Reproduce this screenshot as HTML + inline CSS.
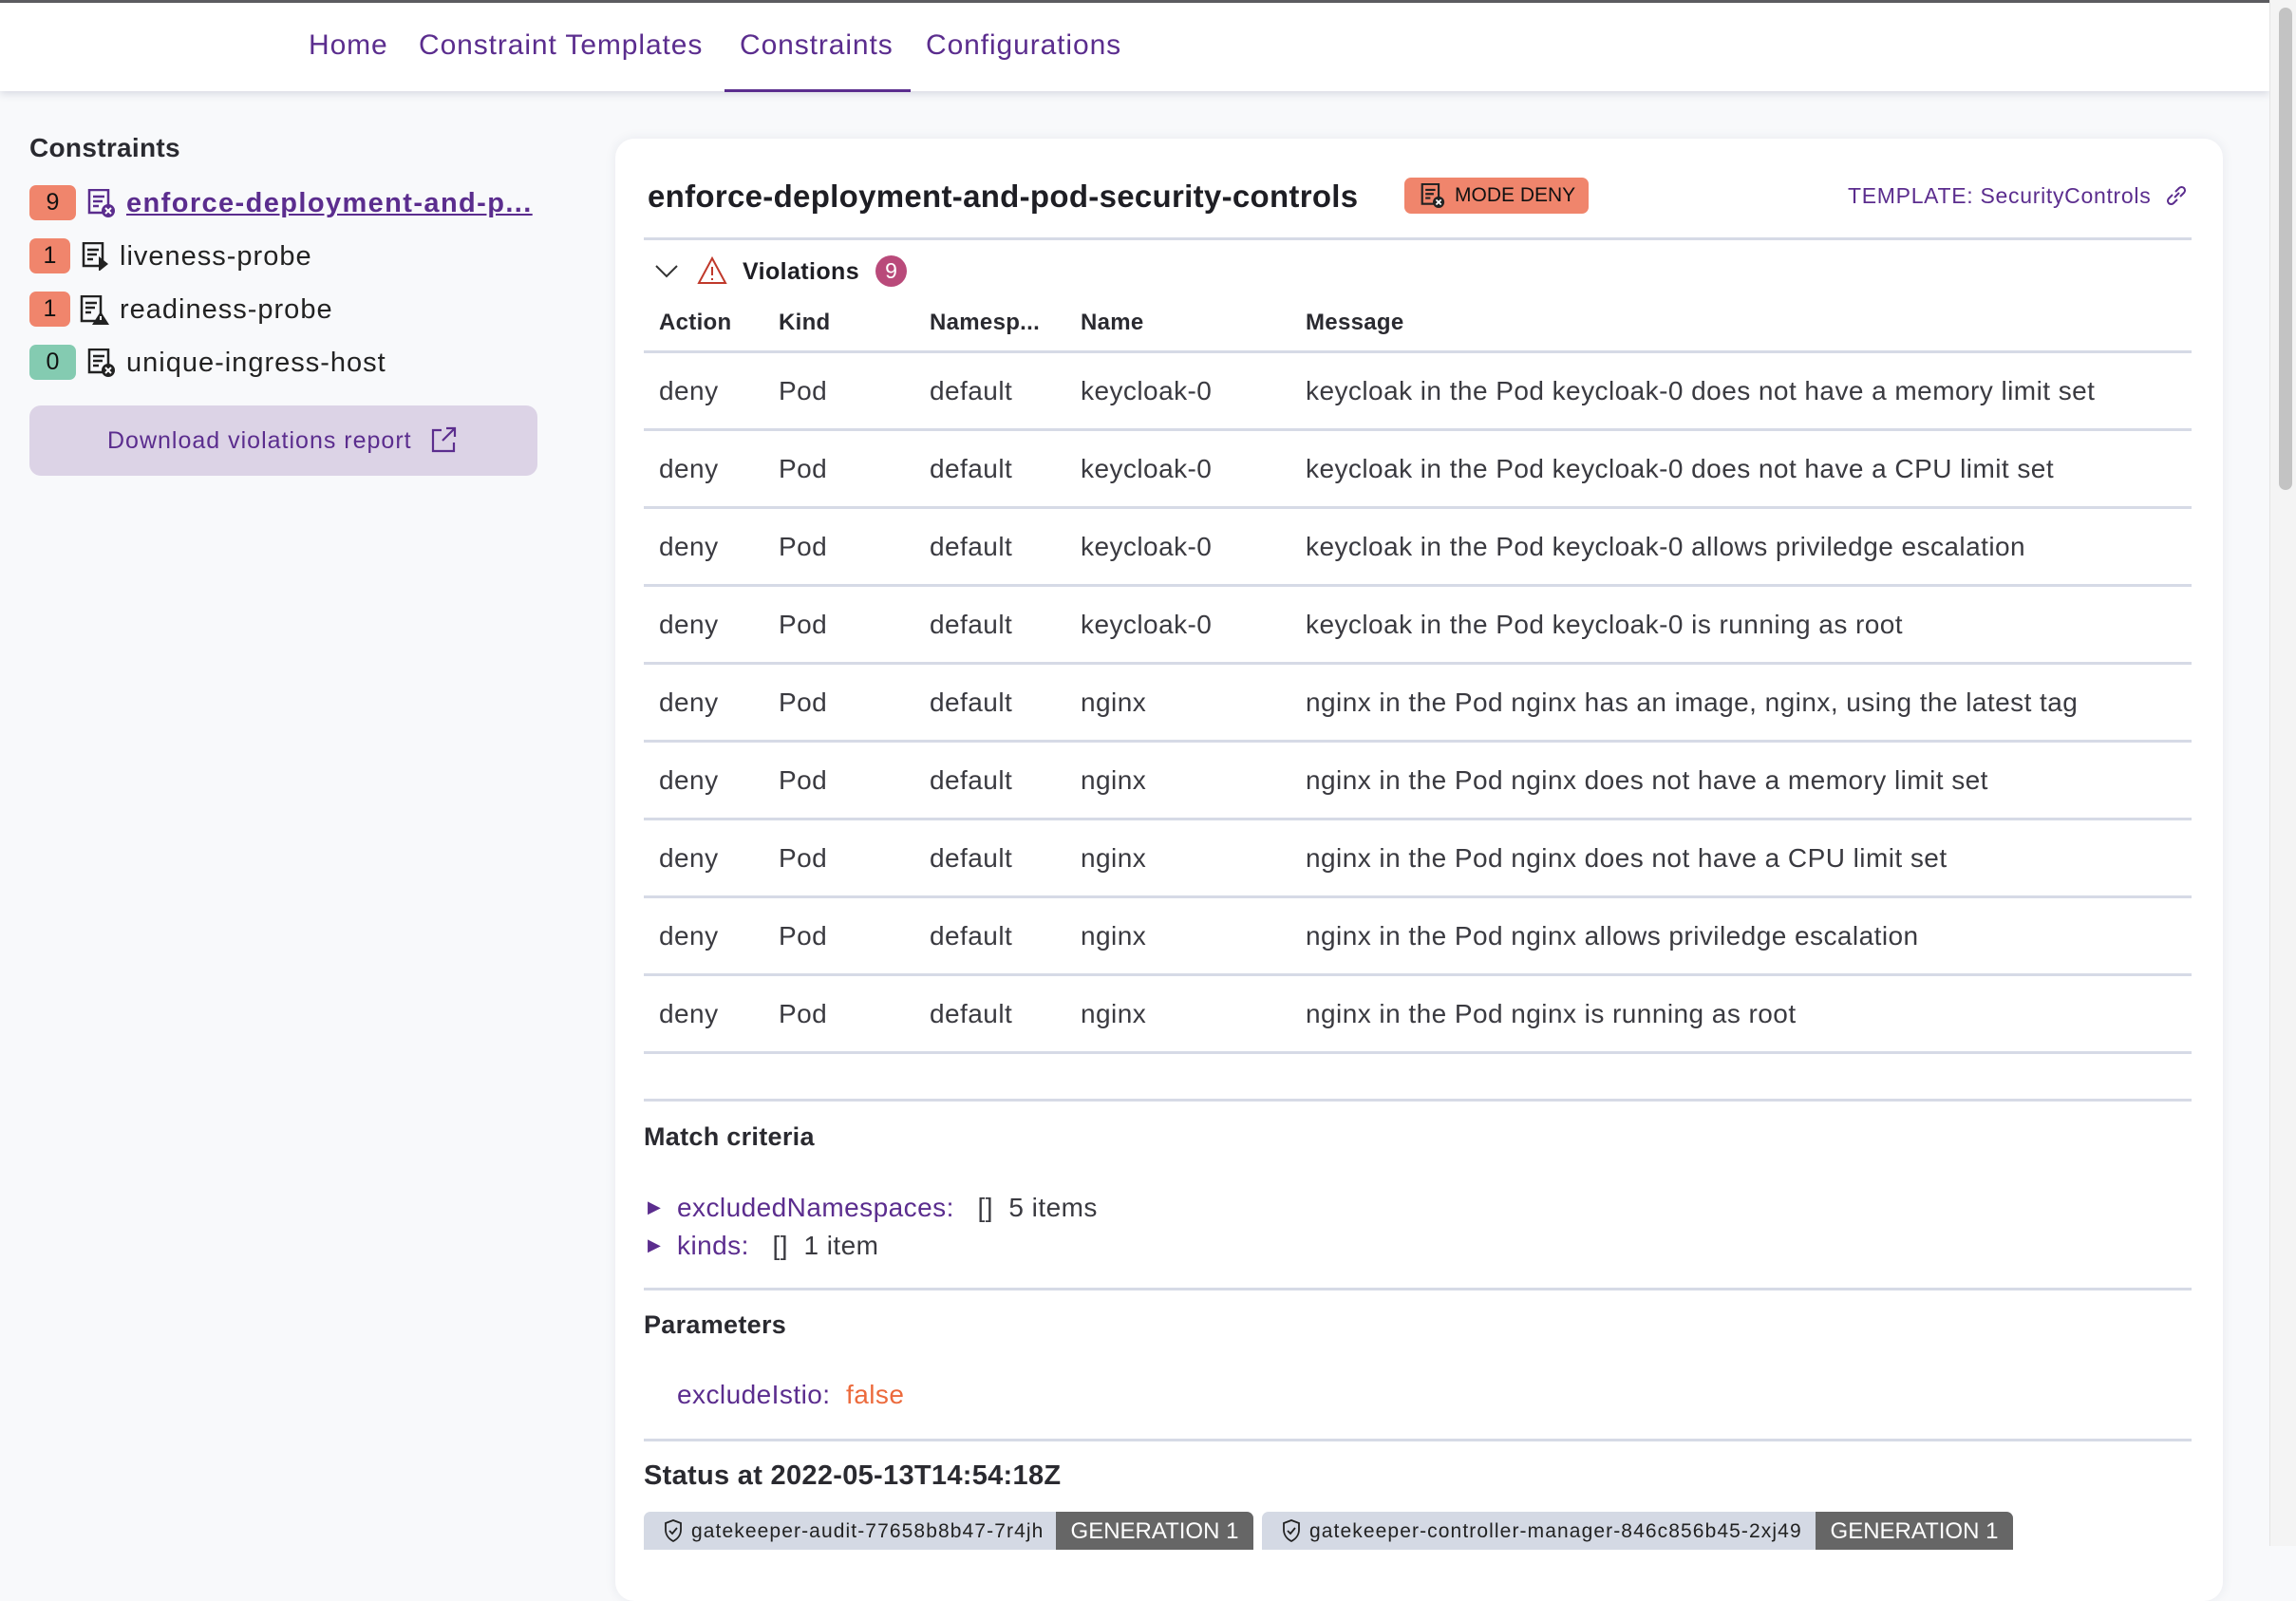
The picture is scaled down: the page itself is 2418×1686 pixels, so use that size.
<!DOCTYPE html>
<html><head><meta charset="utf-8"><style>
*{box-sizing:border-box;margin:0;padding:0}
body{width:2418px;height:1628px;overflow:hidden;background:#f8f9fb;font-family:"Liberation Sans",sans-serif;color:#2a2a30;position:relative}
.a{position:absolute;white-space:nowrap}
.nav{position:absolute;left:0;top:0;width:2390px;height:96px;background:#fff;border-top:3px solid #5c5c60;box-shadow:0 3px 8px rgba(40,50,90,.15)}
.nav span{position:absolute;top:28px;font-size:30px;color:#5b2d8e;letter-spacing:0.9px}
.sb{position:absolute;left:2390px;top:0;width:28px;height:1628px;background:#f4f4f4;border-left:1px solid #e4e4e4}
.thumb{position:absolute;left:2400px;top:8px;width:14px;height:508px;border-radius:7px;background:#c3c3c3}
.badge{position:absolute;left:31px;width:49px;height:37px;border-radius:7px;background:#f0856c;font-size:25px;text-align:center;line-height:37px;color:#111}
.item{position:absolute;left:126px;font-size:29px;color:#222;letter-spacing:1px}
.card{position:absolute;left:648px;top:146px;width:1693px;height:1540px;background:#fff;border-radius:20px;box-shadow:0 0 12px rgba(40,50,90,.08)}
.line{position:absolute;left:678px;width:1630px;height:3px;background:#d6dae6}
.th{position:absolute;top:326px;font-size:24px;font-weight:bold;color:#2a2a30;letter-spacing:0.3px}
.td{position:absolute;font-size:28px;color:#3a3a40;letter-spacing:0.45px}
h3{position:absolute;font-size:27px;font-weight:bold;color:#2a2a30;letter-spacing:0.3px}
.k{color:#5b2d8e}
</style></head><body>
<div class="nav">
<span style="left:325px">Home</span>
<span style="left:441px">Constraint Templates</span>
<span style="left:779px">Constraints</span>
<span style="left:975px">Configurations</span>
<div style="position:absolute;left:763px;top:91px;width:196px;height:3px;background:#5b2d8e"></div>
</div>
<div class="sb"></div><div class="thumb"></div>

<div class="a" style="left:31px;top:140px;font-size:28px;font-weight:bold;color:#2a2a30;letter-spacing:0.3px">Constraints</div>
<div class="badge" style="top:195px">9</div>
<div class="badge" style="top:251px;width:43px">1</div>
<div class="badge" style="top:307px;width:43px">1</div>
<div class="badge" style="top:363px;background:#84cbb1">0</div>
<svg class="a" style="left:92px;top:199px" width="30" height="30" viewBox="0 0 30 30"><rect x="2" y="1" width="20" height="24" fill="none" stroke="#5b2d8e" stroke-width="2.5"/><path d="M6 8h12M6 13h10M6 18h6" stroke="#5b2d8e" stroke-width="2.5"/><circle cx="22" cy="23" r="7" fill="#5b2d8e"/><path d="M19 20l6 6M25 20l-6 6" stroke="#fff" stroke-width="2"/></svg>
<svg class="a" style="left:86px;top:255px" width="30" height="30" viewBox="0 0 30 30"><rect x="2" y="1" width="20" height="24" fill="none" stroke="#222" stroke-width="2.5"/><path d="M6 8h12M6 13h10M6 18h6" stroke="#222" stroke-width="2.5"/><path d="M18 15l10 8-10 8z" fill="#222"/></svg>
<svg class="a" style="left:84px;top:311px" width="32" height="32" viewBox="0 0 32 32"><rect x="2" y="1" width="20" height="26" fill="none" stroke="#222" stroke-width="2.5"/><path d="M6 8h12M6 13h10M6 18h6" stroke="#222" stroke-width="2.5"/><path d="M22 17l9 14h-18z" fill="#222"/><path d="M22 22v4" stroke="#fff" stroke-width="2"/></svg>
<svg class="a" style="left:92px;top:367px" width="30" height="30" viewBox="0 0 30 30"><rect x="2" y="1" width="20" height="24" fill="none" stroke="#222" stroke-width="2.5"/><path d="M6 8h12M6 13h10M6 18h6" stroke="#222" stroke-width="2.5"/><circle cx="22" cy="23" r="7" fill="#222"/><path d="M19 20l6 6M25 20l-6 6" stroke="#fff" stroke-width="2"/></svg>
<div class="item" style="left:133px;top:198px;font-weight:bold;color:#5b2d8e;text-decoration:underline;letter-spacing:1.4px">enforce-deployment-and-p...</div>
<div class="item" style="top:254px">liveness-probe</div>
<div class="item" style="top:310px">readiness-probe</div>
<div class="item" style="left:133px;top:366px">unique-ingress-host</div>
<div class="a" style="left:31px;top:427px;width:535px;height:74px;border-radius:12px;background:#dcd3e6"></div>
<div class="a" style="left:113px;top:450px;font-size:25px;color:#5b2d8e;letter-spacing:1px">Download violations report</div>
<svg class="a" style="left:452px;top:448px" width="30" height="30" viewBox="0 0 30 30" fill="none" stroke="#5b2d8e" stroke-width="2.2"><path d="M13 5H4v22h22v-9M18 3h9v9M27 3L14 16"/></svg>

<div class="card"></div>
<div class="a" style="left:682px;top:188px;font-size:33px;font-weight:bold;color:#1e1e24;letter-spacing:0.3px">enforce-deployment-and-pod-security-controls</div>
<div class="a" style="left:1479px;top:187px;width:194px;height:38px;border-radius:7px;background:#f0856c"></div>
<svg class="a" style="left:1496px;top:193px" width="26" height="26" viewBox="0 0 30 30"><rect x="2" y="1" width="20" height="24" fill="none" stroke="#222" stroke-width="2.5"/><path d="M6 8h12M6 13h10M6 18h6" stroke="#222" stroke-width="2.5"/><circle cx="22" cy="23" r="7" fill="#222"/><path d="M19 20l6 6M25 20l-6 6" stroke="#fff" stroke-width="2"/></svg>
<div class="a" style="left:1532px;top:194px;font-size:21px;color:#111">MODE DENY</div>
<div class="a" style="left:1946px;top:193px;font-size:23px;color:#5b2d8e;letter-spacing:0.7px">TEMPLATE: SecurityControls</div>
<svg class="a" style="left:2279px;top:193px" width="26" height="26" viewBox="0 0 26 26" fill="none" stroke="#5b2d8e" stroke-width="2"><path d="M11 15l5-5M9 12l-4 4a3.5 3.5 0 005 5l4-4M17 14l4-4a3.5 3.5 0 00-5-5l-4 4"/></svg>
<div class="line" style="top:250px"></div>
<svg class="a" style="left:688px;top:275px" width="28" height="20" viewBox="0 0 28 20" fill="none" stroke="#333" stroke-width="2"><path d="M3 5l11 11 11-11"/></svg>
<svg class="a" style="left:734px;top:270px" width="32" height="30" viewBox="0 0 32 30" fill="none" stroke="#c0392b" stroke-width="2"><path d="M16 2L30 28H2z"/><path d="M16 11v9M16 23v2"/></svg>
<div class="a" style="left:782px;top:272px;font-size:25px;font-weight:bold;color:#1e1e24;letter-spacing:0.4px">Violations</div>
<div class="a" style="left:922px;top:269px;width:33px;height:33px;border-radius:50%;background:#b94a7a;color:#fff;font-size:23px;text-align:center;line-height:33px">9</div>
<div class="th" style="left:694px">Action</div>
<div class="th" style="left:820px">Kind</div>
<div class="th" style="left:979px">Namesp...</div>
<div class="th" style="left:1138px">Name</div>
<div class="th" style="left:1375px">Message</div>
<div class="line" style="top:369px"></div>

<div class="td" style="left:694px;top:396px">deny</div><div class="td" style="left:820px;top:396px">Pod</div><div class="td" style="left:979px;top:396px">default</div><div class="td" style="left:1138px;top:396px">keycloak-0</div><div class="td" style="left:1375px;top:396px">keycloak in the Pod keycloak-0 does not have a memory limit set</div><div class="line" style="top:451px"></div>
<div class="td" style="left:694px;top:478px">deny</div><div class="td" style="left:820px;top:478px">Pod</div><div class="td" style="left:979px;top:478px">default</div><div class="td" style="left:1138px;top:478px">keycloak-0</div><div class="td" style="left:1375px;top:478px">keycloak in the Pod keycloak-0 does not have a CPU limit set</div><div class="line" style="top:533px"></div>
<div class="td" style="left:694px;top:560px">deny</div><div class="td" style="left:820px;top:560px">Pod</div><div class="td" style="left:979px;top:560px">default</div><div class="td" style="left:1138px;top:560px">keycloak-0</div><div class="td" style="left:1375px;top:560px">keycloak in the Pod keycloak-0 allows priviledge escalation</div><div class="line" style="top:615px"></div>
<div class="td" style="left:694px;top:642px">deny</div><div class="td" style="left:820px;top:642px">Pod</div><div class="td" style="left:979px;top:642px">default</div><div class="td" style="left:1138px;top:642px">keycloak-0</div><div class="td" style="left:1375px;top:642px">keycloak in the Pod keycloak-0 is running as root</div><div class="line" style="top:697px"></div>
<div class="td" style="left:694px;top:724px">deny</div><div class="td" style="left:820px;top:724px">Pod</div><div class="td" style="left:979px;top:724px">default</div><div class="td" style="left:1138px;top:724px">nginx</div><div class="td" style="left:1375px;top:724px">nginx in the Pod nginx has an image, nginx, using the latest tag</div><div class="line" style="top:779px"></div>
<div class="td" style="left:694px;top:806px">deny</div><div class="td" style="left:820px;top:806px">Pod</div><div class="td" style="left:979px;top:806px">default</div><div class="td" style="left:1138px;top:806px">nginx</div><div class="td" style="left:1375px;top:806px">nginx in the Pod nginx does not have a memory limit set</div><div class="line" style="top:861px"></div>
<div class="td" style="left:694px;top:888px">deny</div><div class="td" style="left:820px;top:888px">Pod</div><div class="td" style="left:979px;top:888px">default</div><div class="td" style="left:1138px;top:888px">nginx</div><div class="td" style="left:1375px;top:888px">nginx in the Pod nginx does not have a CPU limit set</div><div class="line" style="top:943px"></div>
<div class="td" style="left:694px;top:970px">deny</div><div class="td" style="left:820px;top:970px">Pod</div><div class="td" style="left:979px;top:970px">default</div><div class="td" style="left:1138px;top:970px">nginx</div><div class="td" style="left:1375px;top:970px">nginx in the Pod nginx allows priviledge escalation</div><div class="line" style="top:1025px"></div>
<div class="td" style="left:694px;top:1052px">deny</div><div class="td" style="left:820px;top:1052px">Pod</div><div class="td" style="left:979px;top:1052px">default</div><div class="td" style="left:1138px;top:1052px">nginx</div><div class="td" style="left:1375px;top:1052px">nginx in the Pod nginx is running as root</div><div class="line" style="top:1107px"></div>

<div class="line" style="top:1157px"></div>
<h3 style="left:678px;top:1182px">Match criteria</h3>
<div class="td" style="left:682px;top:1261px;font-size:18px;color:#5b2d8e">&#9654;</div>
<div class="td" style="left:713px;top:1256px"><span class="k">excludedNamespaces:</span>&nbsp;&nbsp; []&nbsp; 5 items</div>
<div class="td" style="left:682px;top:1301px;font-size:18px;color:#5b2d8e">&#9654;</div>
<div class="td" style="left:713px;top:1296px"><span class="k">kinds:</span>&nbsp;&nbsp; []&nbsp; 1 item</div>
<div class="line" style="top:1356px"></div>
<h3 style="left:678px;top:1380px">Parameters</h3>
<div class="td" style="left:713px;top:1453px"><span class="k">excludeIstio:</span>&nbsp; <span style="color:#ec6a3c">false</span></div>
<div class="line" style="top:1515px"></div>
<h3 style="left:678px;top:1538px;font-size:29px">Status at 2022-05-13T14:54:18Z</h3>

<div class="a" style="left:678px;top:1592px;width:642px;height:40px;border-radius:7px 7px 0 0;background:#d4d9e4;overflow:hidden">
<svg class="a" style="left:20px;top:7px" width="22" height="26" viewBox="0 0 22 26" fill="none" stroke="#222" stroke-width="1.8"><path d="M11 2l8 3v7c0 6-4 10-8 12-4-2-8-6-8-12V5z"/><path d="M7 13l3 3 5-6"/></svg>
<div class="a" style="left:50px;top:9px;font-size:21px;color:#222;letter-spacing:1.1px">gatekeeper-audit-77658b8b47-7r4jh</div>
<div class="a" style="left:434px;top:0;width:208px;height:40px;background:#666;color:#fff;font-size:24px;text-align:center;line-height:42px">GENERATION 1</div>
</div>
<div class="a" style="left:1329px;top:1592px;width:791px;height:40px;border-radius:7px 7px 0 0;background:#d4d9e4;overflow:hidden">
<svg class="a" style="left:20px;top:7px" width="22" height="26" viewBox="0 0 22 26" fill="none" stroke="#222" stroke-width="1.8"><path d="M11 2l8 3v7c0 6-4 10-8 12-4-2-8-6-8-12V5z"/><path d="M7 13l3 3 5-6"/></svg>
<div class="a" style="left:50px;top:9px;font-size:21px;color:#222;letter-spacing:1.1px">gatekeeper-controller-manager-846c856b45-2xj49</div>
<div class="a" style="left:583px;top:0;width:208px;height:40px;background:#666;color:#fff;font-size:24px;text-align:center;line-height:42px">GENERATION 1</div>
</div>
</body></html>
